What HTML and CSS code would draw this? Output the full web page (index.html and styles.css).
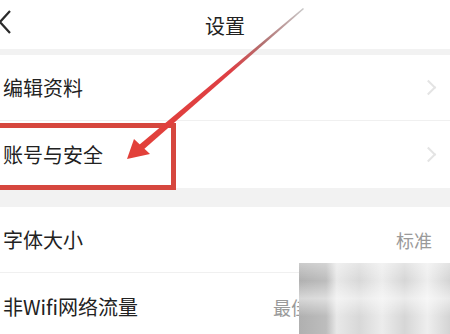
FILE: index.html
```html
<!DOCTYPE html>
<html lang="zh-CN">

<head>
    <meta charset="UTF-8">
    <title>设置</title>
    <link rel="stylesheet" href="styles.css">
</head>

<body>
    <div class="page">
        <div class="topbar">
            <svg class="back" width="16" height="26" viewBox="0 0 16 26">
                <path d="M12 2 L2 13 L12 24" fill="none" stroke="#2a2a2a" stroke-width="2.2" />
            </svg>
            <h1 class="title">设置</h1>
        </div>

        <div class="group first">
            <div class="row">
                <span class="label">编辑资料</span>
                <span class="chev"></span>
            </div>
            <div class="row">
                <span class="label">账号与安全</span>
                <span class="chev"></span>
            </div>
        </div>

        <div class="group">
            <div class="row">
                <span class="label">字体大小</span>
                <span class="value">标准</span>
            </div>
            <div class="row">
                <span class="label">非Wifi网络流量</span>
                <span class="value wide">最佳效果</span>
            </div>
        </div>

        <!-- annotation drawn on top of the screenshot -->
        <svg class="mark" width="450" height="334" viewBox="0 0 450 334">
            <defs>
                <linearGradient id="shaft" x1="303" y1="8" x2="140" y2="148" gradientUnits="userSpaceOnUse">
                    <stop offset="0" stop-color="#c8c8c8" />
                    <stop offset="0.25" stop-color="#b27070" />
                    <stop offset="0.45" stop-color="#de3f44" />
                    <stop offset="1" stop-color="#e2403a" />
                </linearGradient>
            </defs>
            <rect x="-4" y="125.5" width="177.5" height="62" fill="none" stroke="#d6473e" stroke-width="5" />
            <polygon points="303,8 304,9 143,150 139,145" fill="url(#shaft)" />
            <polygon points="127,159 134,139 150,154" fill="#e2403a" />
        </svg>

        <div class="blur"></div>
    </div>
</body>

</html>
```

FILE: styles.css
```css
body {
    margin: 0;
    background-color: #f2f2f2;
    font-family: "Noto Sans CJK SC", "Noto Sans", sans-serif;
    color: #222;
}

.page {
    position: relative;
    width: 450px;
    height: 334px;
    overflow: hidden;
}

.topbar {
    position: relative;
    height: 49px;
    background-color: #fff;
    display: flex;
    align-items: center;
    justify-content: center;
}

.back {
    position: absolute;
    left: -2px;
    top: 9px;
}

.title {
    margin: 0;
    font-size: 20px;
    font-weight: normal;
    color: #222;
    padding-top: 1px;
}

.group {
    background-color: #fff;
    margin-top: 19px;
}

.group.first {
    margin-top: 6px;
}

.row {
    height: 65px;
    display: flex;
    align-items: center;
    justify-content: space-between;
    padding: 0 10px 0 3px;
    border-bottom: 1px solid #f0f0f0;
}

.row:last-child {
    border-bottom: none;
    height: 67px;
}

.label {
    font-size: 20px;
    color: #222;
}

.chev {
    width: 9px;
    height: 9px;
    margin-right: 6px;
    border-top: 2px solid #e4e4e4;
    border-right: 2px solid #e4e4e4;
    transform: rotate(45deg);
}

.value {
    font-size: 18px;
    color: #9a9a9a;
    margin-right: 8px;
}

.value.wide {
    margin-right: 95px;
}

.mark {
    position: absolute;
    left: 0;
    top: 0;
}

.blur {
    position: absolute;
    left: 299px;
    top: 263px;
    width: 151px;
    height: 71px;
    background:
        linear-gradient(180deg, rgba(255, 255, 255, 0.35) 0%, rgba(255, 255, 255, 0) 25%, rgba(255, 255, 255, 0.5) 50%, rgba(255, 255, 255, 0) 75%),
        linear-gradient(90deg, #b0b0b0 0%, #bdbdbd 18%, #e8e8e8 25%, #d8d8d8 40%, #ececec 55%, #d6d6d6 70%, #eeeeee 85%, #d4d4d4 100%);
}
```
